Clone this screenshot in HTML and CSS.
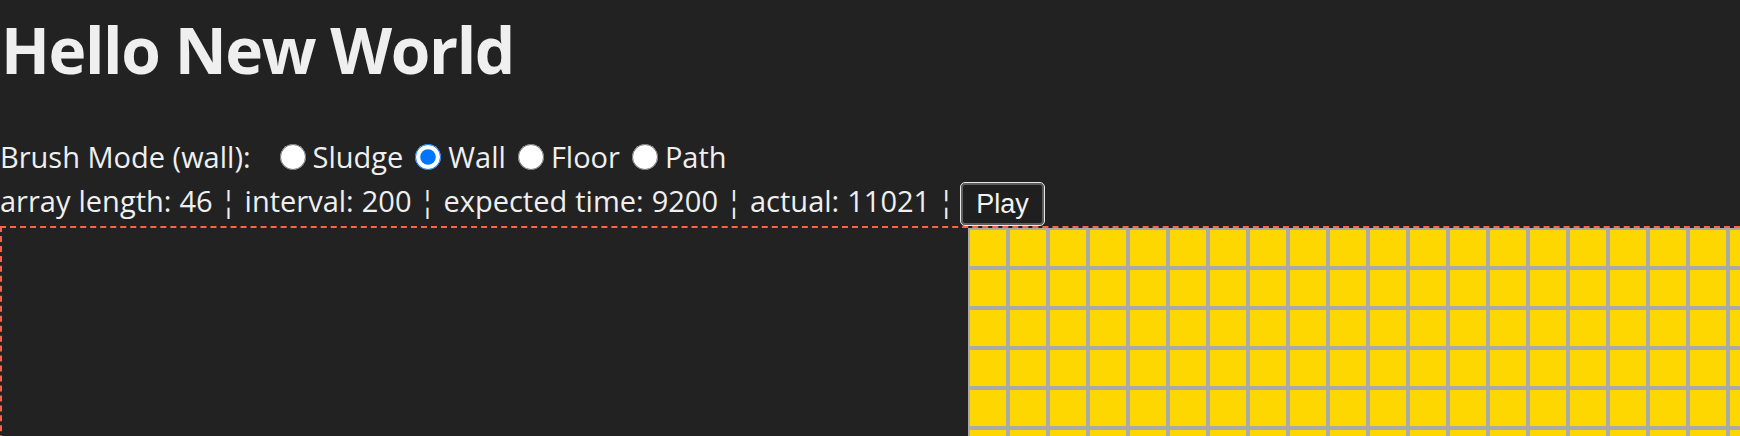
FILE: index.html
```html
<!DOCTYPE html>
<html lang="en">
<head>
<meta charset="utf-8">
<title>Hello New World</title>
<link rel="stylesheet" href="styles.css">
</head>
<body>
<h1 class="title">Hello New World</h1>
<div class="brush">
  <span class="brush-label">Brush Mode (wall):</span>
  <label class="opt"><input type="radio" name="brush" value="sludge"><span>Sludge</span></label>
  <label class="opt"><input type="radio" name="brush" value="wall" checked><span>Wall</span></label>
  <label class="opt"><input type="radio" name="brush" value="floor"><span>Floor</span></label>
  <label class="opt"><input type="radio" name="brush" value="path"><span>Path</span></label>
</div>
<div class="stats">
  <span class="stats-text">array length: 46 ¦ interval: 200 ¦ expected time: 9200 ¦ actual: 11021 ¦</span>
  <button class="play" type="button">Play</button>
</div>
<div class="board">
  <div class="grid" id="grid"></div>
</div>
<script src="script.js"></script>
</body>
</html>
```
FILE: styles.css
```css
html, body {
  overflow: hidden;
}
body {
  margin: 0;
  background: #222222;
  color: #efefef;
  font-family: "Open Sans", "Noto Sans", sans-serif;
}
.title {
  margin: 18px 0 0 0;
  font-size: 64px;
  line-height: 64px;
  font-weight: 700;
  letter-spacing: -1.4px;
  padding-left: 1px;
}
.brush {
  margin-top: 55px;
  height: 40px;
  display: flex;
  align-items: center;
  font-size: 29px;
  line-height: 40px;
}
.brush-label {
  margin-right: 17px;
}
.opt {
  display: flex;
  align-items: center;
}
.opt input {
  width: 26px;
  height: 26px;
  margin: 0 7px 0 12px;
}
.stats {
  margin-top: 5px;
  height: 44px;
  display: flex;
  align-items: flex-start;
  font-size: 29px;
}
.stats-text {
  line-height: 38px;
  word-spacing: 0.5px;
}
.play {
  margin-left: 6px;
  width: 85px;
  height: 44px;
  border: 1px solid #e6e6e6;
  border-radius: 5px;
  box-shadow: inset 0 0 0 2px #5e5e5e;
  background: #1f1f1f;
  color: #f2f2f2;
  font-family: "Liberation Sans", Arial, sans-serif;
  font-size: 27px;
  padding: 0;
}
.board {
  border: 2px dashed #ff6347;
  height: 600px;
}
.grid {
  margin-left: 966px;
  display: grid;
  grid-template-columns: repeat(20, 40px);
  grid-auto-rows: 40px;
  width: 800px;
}
.cell {
  box-sizing: border-box;
  background: #ffd700;
  border: 2px solid #aaaaaa;
}
```
FILE: script.js
```js
const grid = document.getElementById('grid');
for (let i = 0; i < 160; i++) {
  const c = document.createElement('div');
  c.className = 'cell';
  grid.appendChild(c);
}
```
